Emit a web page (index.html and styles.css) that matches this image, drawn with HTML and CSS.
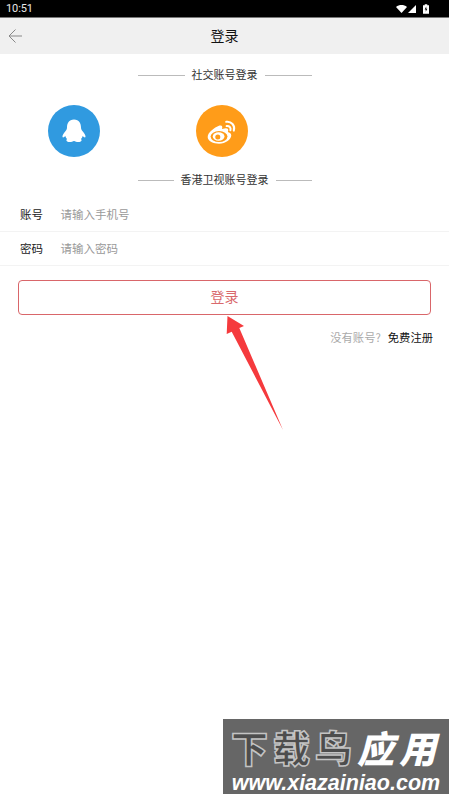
FILE: index.html
```html
<!DOCTYPE html>
<html lang="zh">
<head>
<meta charset="utf-8">
<title>登录</title>
<link rel="stylesheet" href="styles.css">
</head>
<body>
<div class="page">
  <div class="status">
    <span class="time">10:51</span>
    <div class="status-icons">
      <svg width="11" height="8" viewBox="0 0 14 10"><path d="M0 2.500C4-.8 10-.8 14 2.500L7 10z" fill="#fff"/></svg>
      <svg width="8" height="8" viewBox="0 0 10 10"><path d="M10 0V10H0z" fill="#fff"/></svg>
      <svg class="batt" width="6" height="10" viewBox="0 0 7 11"><path d="M2 0H5V1H7V11H0V1H2z" fill="#fff"/><path d="M3.800 2.500L2 6H3.200V8.800L5 5.200H3.800z" fill="#000"/></svg>
    </div>
  </div>
  <header class="toolbar">
    <svg class="back" width="15" height="14" viewBox="0 0 15 14"><path d="M14 7H1M7.500.5L1 7l6.500 6.500" fill="none" stroke="#888" stroke-width="1"/></svg>
    <h1 class="title">登录</h1>
  </header>
  <div class="divider first"><i></i><span>社交账号登录</span><i></i></div>
  <div class="socials">
    <div class="circle qq">
      <svg width="26" height="26" viewBox="0 0 26 26"><path d="M13 1.500C7.800 1.500 6 5.500 6 9.500 6 11 5.500 12 4.200 13.500 2.500 15.500 1.200 17.500 1.500 19 1.800 20 3.300 19.300 4.300 18 4.700 19.300 5.200 20.300 6 21 4.800 22 5.500 24 8.500 24 10.500 24 11.800 23.500 13 23 14.200 23.500 15.500 24 17.500 24 20.500 24 21.200 22 20 21 20.800 20.300 21.300 19.300 21.700 18 22.700 19.300 24.200 20 24.500 19 24.800 17.500 23.500 15.500 21.800 13.500 20.500 12 20 11 20 9.500 20 5.500 18.200 1.500 13 1.500z" fill="#fff"/></svg>
    </div>
    <div class="circle weibo">
      <svg width="32" height="27" viewBox="0 0 38 32"><path d="M16 9C9.500 11.500 2 17.500 2 22.500 2 27.500 9 30.500 15.500 30.500 23.500 30.500 30 25.500 30 20.500 30 18 27.500 17 26 16.500 27 14 26.500 12 23.500 12 21.500 12 19 13 19 13 20 10 19 8 16 9z" fill="#fff"/><ellipse cx="15.500" cy="22" rx="10" ry="6.500" fill="#ff9c19"/><ellipse cx="15" cy="22" rx="7" ry="5" fill="#fff"/><circle cx="14" cy="22.500" r="3" fill="#ff9c19"/><path d="M24 4.500C30 3.500 35 9 33 15M24.500 9.500C27.500 9 30 11.500 29 14.500" fill="none" stroke="#fff" stroke-width="2.400" stroke-linecap="round"/></svg>
    </div>
  </div>
  <div class="divider second"><i></i><span>香港卫视账号登录</span><i></i></div>
  <div class="form">
    <div class="row"><label class="label">账号</label><span class="hint">请输入手机号</span></div>
    <div class="row"><label class="label">密码</label><span class="hint">请输入密码</span></div>
  </div>
  <button class="submit">登录</button>
  <div class="register"><span class="muted">没有账号?</span><span class="link">免费注册</span></div>

  <svg class="arrow" width="60" height="118" viewBox="0 0 60 118"><path d="M2.500 1L1.700 19 6.700 16.700 58 115 14.300 13 19 11z" fill="#f53a3d"/></svg>

  <div class="mark">
    <div class="mark-title"><span class="outline">下载鸟</span><span class="solid">应用</span></div>
    <div class="mark-url">www.xiazainiao.com</div>
  </div>
</div>
</body>
</html>
```

FILE: styles.css
```css
* { box-sizing: border-box; }
html, body { margin: 0; padding: 0; }
body { background: #fff; font-family: "Noto Sans CJK SC", "Noto Sans", sans-serif; color: #333; }
.page { position: relative; width: 449px; height: 798px; overflow: hidden; }

.status { height: 18px; background: #000; border-bottom: 1px solid #777; display: flex; align-items: center; justify-content: space-between; padding: 0 20px 0 6px; }
.time { font: 11px/17px Roboto, sans-serif; color: #e8e8e8; letter-spacing: -.1px; }
.status-icons { display: flex; align-items: center; gap: 1px; }
.batt { margin-left: 6px; }

.toolbar { height: 36px; background: #f0f0f0; display: flex; align-items: center; justify-content: center; position: relative; padding-bottom: 3px; }
.back { position: absolute; left: 8px; top: 11px; }
.title { margin: 0; font-size: 14px; font-weight: 400; color: #111; line-height: 20px; }

.divider { width: 174px; margin: 0 auto; display: flex; align-items: center; justify-content: space-between; font-size: 11px; line-height: 16px; color: #333; }
.divider i { flex: 1; height: 1px; background: #bbb; }
.divider span { padding: 0 7px; position: relative; top: -1px; }
.divider.first { margin-top: 13px; }
.divider.second { margin-top: 15px; }

.socials { display: flex; gap: 96px; padding-left: 48px; margin-top: 22px; }
.circle { width: 52px; height: 52px; border-radius: 50%; display: flex; align-items: center; justify-content: center; }
.qq { background: #309ae0; }
.weibo { background: #ff9c19; }

.form { margin-top: 10px; }
.row { height: 34px; border-bottom: 1px solid #f3f3f3; display: flex; align-items: center; padding: 0 0 2px 20px; font-size: 11.500px; }
.label { width: 40.500px; color: #222; }
.hint { color: #999; }

.submit { display: block; width: 413px; height: 35px; margin: 14px 0 0 18px; padding: 0 0 3px; background: #fff; border: 1.500px solid #d9666a; border-radius: 4px; color: #d9696c; font: 14px/20px "Noto Sans CJK SC", sans-serif; }

.register { display: flex; justify-content: flex-end; gap: 7px; padding-right: 16px; margin-top: 14px; font-size: 11.300px; line-height: 16px; }
.muted { color: #aaa; }
.link { color: #111; }

.arrow { position: absolute; left: 225px; top: 315px; }

.mark { position: absolute; left: 223px; top: 719px; width: 226px; height: 75px; background: #666; overflow: hidden; display: flex; flex-direction: column; align-items: center; padding-top: 9px; gap: 8px; }
.mark-title { display: flex; font-family: "Noto Sans CJK SC", sans-serif; font-size: 37px; line-height: 38px; height: 38px; font-weight: 900; white-space: nowrap; letter-spacing: 5px; }
.outline { color: #4d4d4d; -webkit-text-stroke: 1.500px #c4c4c4; line-height: 38px; }
.solid { color: #fff; font-style: italic; line-height: 38px; }
.mark-url { font: italic 700 21.500px/18px "Liberation Sans", sans-serif; color: #fff; white-space: nowrap; }
```
